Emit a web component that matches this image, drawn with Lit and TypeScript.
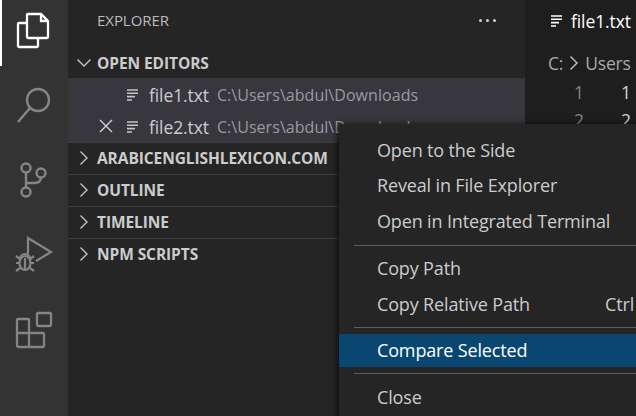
import { LitElement, html, css, svg } from "lit";
import { customElement } from "lit/decorators.js";

const fileIcon = html`<svg class="fi" width="16" height="16" viewBox="0 0 16 16" fill="none" stroke="currentColor" stroke-width="1.6"><path d="M2 3h11M2 6.3h11M2 9.6h8M2 13h5"/></svg>`;
const chevD = html`<svg class="chev" width="16" height="16" viewBox="0 0 16 16" fill="none" stroke="#c5c5c5" stroke-width="1.4"><path d="M1.5 4.5 8 11l6.5-6.5"/></svg>`;
const chevR = html`<svg class="chev" width="16" height="16" viewBox="0 0 16 16" fill="none" stroke="#c5c5c5" stroke-width="1.4"><path d="M4.5 1.5 11 8l-6.5 6.5"/></svg>`;

const icons = [
  svg`<path d="M14 14H6a1 1 0 0 0-1 1v22a1 1 0 0 0 1 1h18a1 1 0 0 0 1-1v-8M15 5h13l7 7v16a1 1 0 0 1-1 1H15a1 1 0 0 1-1-1V6a1 1 0 0 1 1-1ZM28 5v7h7" stroke="#fff" stroke-width="2.3"/>`,
  svg`<circle cx="25" cy="17" r="11" stroke="#858585" stroke-width="2.4"/><path d="M17 25 5 39" stroke="#858585" stroke-width="2.6"/>`,
  svg`<g stroke="#858585" stroke-width="2.4"><circle cx="13" cy="9" r="4.5"/><circle cx="28" cy="14" r="4.5"/><circle cx="13" cy="33" r="4.5"/><path d="M13 13.5v15M13 24h8q7 0 7-5.5"/></g>`,
  svg`<g stroke="#858585" stroke-width="2.2"><path d="M15 19V3l23 14-15 9"/><ellipse cx="12" cy="28" rx="5.5" ry="7"/><path d="M7 24a5 5 0 0 1 10 0M6.5 28H3M21 28h-3.5M7 33l-4 3M17 33l4 3M7 24l-4-3M17 24l4-3M12 23v12"/></g>`,
  svg`<g stroke="#858585" stroke-width="2.3"><rect x="24" y="2" width="14" height="13" rx="1"/><path d="M5 8h10a1 1 0 0 1 1 1v13h14a1 1 0 0 1 1 1v12a1 1 0 0 1-1 1H6a2 2 0 0 1-2-2V9a1 1 0 0 1 1-1ZM4 22h12v14"/></g>`,
];

@customElement("app-root")
export class AppRoot extends LitElement {
  static styles = css`
    :host { display: block; width: 636px; height: 416px; overflow: hidden; position: relative; font-family: "Open Sans", "Noto Sans", sans-serif; }
    .shell { display: flex; height: 416px; }
    .activity { width: 68px; flex: none; background: #333333; display: flex; flex-direction: column; }
    .act { height: 76px; display: flex; align-items: center; justify-content: center; flex: none; box-sizing: border-box; }
    .act.first { height: 66px; border-left: 2px solid #fff; padding: 0 2px 6px 0; }
    .act svg { width: 42px; height: 42px; }
    .side { width: 457px; flex: none; background: #252526; color: #cccccc; display: flex; flex-direction: column; }
    .head { height: 46px; flex: none; display: flex; align-items: center; justify-content: space-between; padding: 0 29px 6px 29px; font-size: 15px; color: #bbbbbb; box-sizing: border-box; letter-spacing: -0.05px; }
    .dots { display: flex; gap: 4px; }
    .dots i { width: 3px; height: 3px; border-radius: 50%; background: #d0d0d0; }
    .sec { height: 32px; flex: none; display: flex; align-items: center; gap: 5px; padding-left: 8px; font-size: 15.5px; font-weight: 700; color: #cccccc; box-sizing: border-box; letter-spacing: -0.08px; }
    .sec.open { padding-top: 2px; }
    .sec.border { border-top: 1px solid #3c3c3c; padding-bottom: 2px; }
    .row { height: 32px; flex: none; display: flex; align-items: center; background: #37373d; font-size: 17.5px; color: #cccccc; position: relative; box-sizing: border-box; padding: 1px 0 0 57px; letter-spacing: -0.1px; }
    .row .x { position: absolute; left: 30px; top: 8px; }
    .row .fi { margin-right: 8px; color: #c5c5c5; }
    .row .path { font-size: 16px; color: #9a9a9d; margin-left: 8px; letter-spacing: 0.05px; }
    .editor { flex: 1; background: #1e1e1e; color: #cccccc; display: flex; flex-direction: column; overflow: hidden; }
    .tab { height: 46px; flex: none; display: flex; align-items: center; gap: 6px; padding: 0 0 4px 24px; font-size: 17.5px; color: #ffffff; box-sizing: border-box; letter-spacing: -0.1px; white-space: nowrap; }
    .crumb { height: 30px; margin-top: 2px; flex: none; display: flex; align-items: center; gap: 3px; padding-left: 23px; font-size: 17.5px; color: #a9a9a9; white-space: nowrap; letter-spacing: -0.2px; }
    .line { height: 28px; display: flex; align-items: center; font-size: 17.5px; flex: none; }
    .ln { padding-left: 49px; color: #858585; flex: none; width: 47px; }
    .tx { color: #d4d4d4; }
    .menu { position: absolute; left: 339px; top: 124px; width: 320px; height: 292px; background: #252526; box-shadow: 0 2px 8px #000; color: #cccccc; font-size: 18px; padding-top: 8px; box-sizing: border-box; letter-spacing: -0.15px; }
    .mi { height: 35.5px; display: flex; align-items: center; padding-left: 38px; white-space: nowrap; }
    .mi .key { position: absolute; left: 266px; }
    .mi.sel { height: 33px; background: #094771; color: #ffffff; }
    .sep { height: 1px; background: #5f5f60; margin: 6px 0 5px 15px; }
    .sep.mid { margin: 5px 0 6px 15px; }
    .sep.after { margin: 6px 0 6px 15px; }
  `;
  render() {
    return html`
      <div class="shell">
        <nav class="activity">
          ${icons.map((p, i) => html`<div class="act ${i === 0 ? "first" : ""}"><svg viewBox="0 0 42 42" fill="none">${p}</svg></div>`)}
        </nav>
        <aside class="side">
          <div class="head"><span>EXPLORER</span><span class="dots"><i></i><i></i><i></i></span></div>
          <div class="sec open">${chevD}<span>OPEN EDITORS</span></div>
          <div class="row">${fileIcon}<span>file1.txt</span><span class="path">C:\\Users\\abdul\\Downloads</span></div>
          <div class="row"><svg class="x" width="16" height="16" viewBox="0 0 16 16" fill="none" stroke="#d4d4d4" stroke-width="1.4"><path d="M2 2l12 12M14 2 2 14"/></svg>${fileIcon}<span>file2.txt</span><span class="path">C:\\Users\\abdul\\Downloads</span></div>
          ${["ARABICENGLISHLEXICON.COM", "OUTLINE", "TIMELINE", "NPM SCRIPTS"].map((t) => html`<div class="sec border">${chevR}<span>${t}</span></div>`)}
        </aside>
        <main class="editor">
          <div class="tab">${fileIcon}<span>file1.txt</span></div>
          <div class="crumb"><span>C:</span>${chevR}<span>Users</span></div>
          <div class="line"><span class="ln">1</span><span class="tx">1</span></div>
          <div class="line"><span class="ln">2</span><span class="tx">2</span></div>
        </main>
      </div>
      <div class="menu">
        <div class="mi">Open to the Side</div>
        <div class="mi">Reveal in File Explorer</div>
        <div class="mi">Open in Integrated Terminal</div>
        <div class="sep"></div>
        <div class="mi">Copy Path</div>
        <div class="mi">Copy Relative Path<span class="key">Ctrl</span></div>
        <div class="sep mid"></div>
        <div class="mi sel">Compare Selected</div>
        <div class="sep after"></div>
        <div class="mi">Close</div>
      </div>
    `;
  }
}
